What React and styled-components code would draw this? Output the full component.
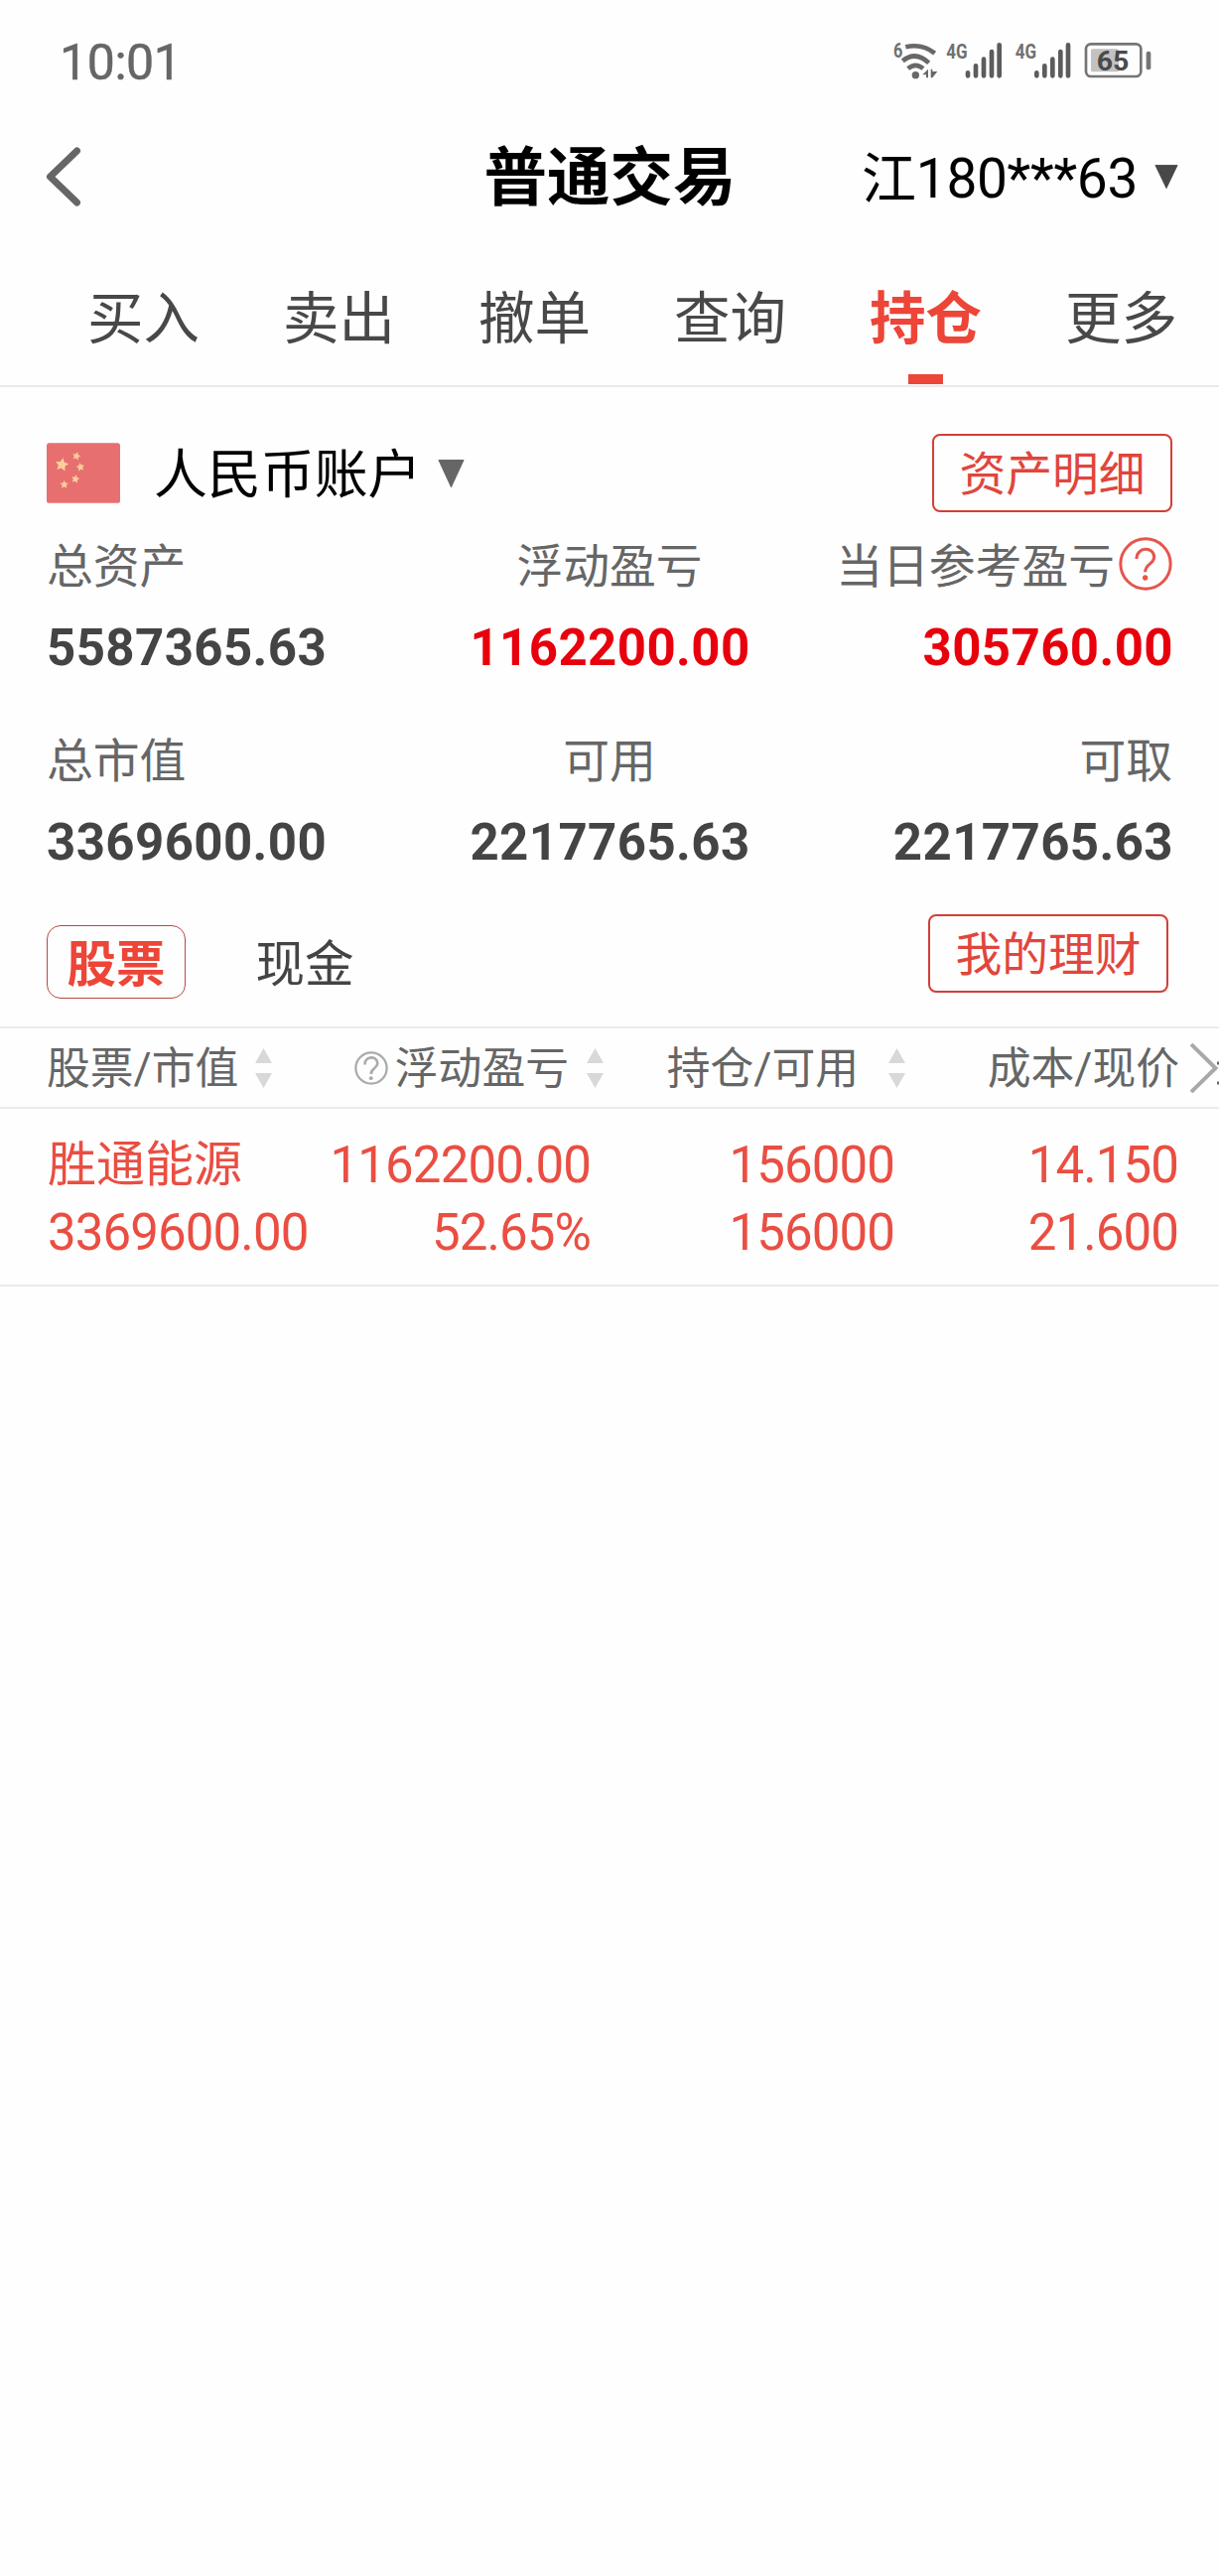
import React from 'react'

// style
import styled, { createGlobalStyle } from 'styled-components';

const red = "#ed4538";
const rowRed = "#ea4e42";

const GlobalStyle = createGlobalStyle`
    body {
        margin: 0;
        background-color: #fefefe;
        color: #444;
        font-family: Roboto, "Noto Sans CJK SC", sans-serif;
    }
`;

const Container = styled.div`
    min-height: 2595px;
    overflow: hidden;
`;

// status bar
const StatusBar = styled.div`
    display: flex;
    justify-content: space-between;
    align-items: center;
    box-sizing: border-box;
    height: 126px;
    padding: 4px 48px 0 60px;
`;

const Time = styled.span`
    margin-bottom: 4px;
    font-size: 50px;
    font-weight: 400;
    -webkit-text-stroke: 0.5px #666;
    letter-spacing: -0.4px;
    line-height: 60px;
    color: #666;
`;

// title bar
const TitleBar = styled.header`
    display: grid;
    grid-template-columns: 1fr auto 1fr;
    align-items: center;
    height: 108px;
    padding: 0 41px 0 42px;
`;

const Title = styled.h1`
    margin: 0;
    font-size: 63.5px;
    font-weight: 700;
    line-height: 80px;
    color: #000;
`;

const Account = styled.div`
    display: flex;
    justify-content: flex-end;
    align-items: center;
    gap: 17px;

    font-size: 55px;
    letter-spacing: -0.3px;
    line-height: 70px;
    color: #000;

    svg {
        margin-bottom: 5px;
    }
`;

// tabs
const Tabs = styled.nav`
    display: grid;
    grid-template-columns: repeat(6, 197px);
    padding: 56px 0 1px 46px;
    border-bottom: 2px solid #e9e9e9;
`;

const Tab = styled.div`
    display: flex;
    flex-direction: column;
    align-items: center;
    gap: 23px;

    font-size: 56.5px;
    font-weight: ${props => props.$active ? 700 : 400};
    line-height: 64px;
    color: ${props => props.$active ? red : "#484848"};

    &::after {
        content: "";
        width: 35px;
        height: 10px;
        background-color: ${props => props.$active ? red : "transparent"};
    }
`;

// assets
const Assets = styled.section`
    padding: 47px 47px 0;
`;

const AccountRow = styled.div`
    display: flex;
    align-items: center;
    height: 79px;
`;

const Currency = styled.span`
    margin: 4px 17px 0 34px;
    font-size: 53.9px;
    line-height: 70px;
    color: #000;
`;

const OutlineButton = styled.button`
    box-sizing: border-box;
    width: 242px;
    height: 79px;
    margin-left: auto;
    padding: 3px 0 0;

    background-color: transparent;
    border: 2px solid #d23f36;
    border-radius: 8px;

    font-family: inherit;
    font-size: 46.8px;
    line-height: 60px;
    color: #e0463c;
`;

const Summary = styled.div`
    display: grid;
    grid-template-columns: 1fr 1fr 1fr;
    row-gap: 53px;
    margin-top: 24px;
`;

const SummaryItem = styled.div`
    display: flex;
    flex-direction: column;
    align-items: ${props => props.$align || "center"};
    gap: 21px;
    white-space: nowrap;
`;

const Label = styled.div`
    display: flex;
    align-items: center;
    gap: 4px;
    height: 62px;
    font-size: 46.8px;
    line-height: 62px;
    color: #666;

    svg {
        margin-bottom: 6px;
    }
`;

const Value = styled.div`
    font-size: 51px;
    font-weight: 700;
    letter-spacing: 0.4px;
    line-height: 60px;
    margin-right: -1px;
    color: ${props => props.$up ? "#e8000d" : "#444"};
`;

// stock / cash switch
const Switcher = styled.div`
    display: flex;
    align-items: flex-start;
    height: 113px;
    padding: 0 51px 0 47px;
    margin-top: 42px;
    border-bottom: 2px solid #ebebeb;
`;

const Kind = styled.div`
    box-sizing: border-box;
    width: 140px;
    height: 74px;
    margin: 11px 50px 0 0;
    padding-top: 2px;

    border: 1px solid ${props => props.$active ? "#b8483f" : "transparent"};
    border-radius: 14px;

    font-size: 49.5px;
    font-weight: ${props => props.$active ? 700 : 400};
    line-height: 74px;
    text-align: center;
    color: ${props => props.$active ? red : "#444"};
`;

// table
const HeadRow = styled.div`
    display: grid;
    grid-template-columns: 275px 286px 304px 275px 41px;
    align-items: center;
    height: 79px;
    padding-left: 47px;
    border-bottom: 2px solid #ebebeb;
    overflow: hidden;
`;

const HeadCell = styled.div`
    display: flex;
    justify-content: ${props => props.$left ? "flex-start" : "flex-end"};
    align-items: center;
    font-size: 43.8px;
    line-height: 60px;
    color: #666;
    white-space: nowrap;

    svg {
        flex-shrink: 0;
    }
`;

const HeadText = styled.span`
    padding-top: 3px;
    margin-left: ${props => props.$before || 0}px;
    margin-right: ${props => props.$gap || 0}px;
`;

const MoreCell = styled(HeadCell)`
    justify-content: flex-start;
    padding-left: 12px;
`;

const Row = styled.div`
    display: grid;
    grid-template-columns: 275px 273px 306px 286px;
    padding: 23px 0 18px 47px;
    border-bottom: 2px solid #ebebeb;
`;

const Cell = styled.div`
    padding-left: ${props => props.$left ? 1 : 0}px;
    text-align: ${props => props.$left ? "left" : "right"};
    font-size: 51px;
    letter-spacing: -0.9px;
    line-height: 68px;
    color: ${rowRed};
    white-space: nowrap;
`;

const StockName = styled.div`
    font-size: 49px;
    letter-spacing: 0;
`;

const BackIcon = () => (
    <svg width="42" height="64" viewBox="0 0 42 64" fill="none" stroke="#666" strokeWidth="7" strokeLinecap="round" strokeLinejoin="round">
        <path d="M35.500 4 L8.500 30 L35.500 56" />
    </svg>
)

const Caret = ({ width, height, color }) => (
    <svg width={width} height={height} viewBox="0 0 26 26" preserveAspectRatio="none">
        <path d="M1 0.500 H25 L13 25.500 Z" fill={color} stroke={color} strokeLinejoin="round" />
    </svg>
)

const Help = ({ size, color, strokeWidth, mark = 1 }) => (
    <svg width={size} height={size} viewBox="0 0 162 162" fill="none" stroke={color} strokeWidth={strokeWidth}>
        <circle cx="81" cy="81" r={80 - strokeWidth / 2} />
        <g transform={`translate(81 81) scale(${mark}) translate(-81 -81)`}>
            <path d="M54 66 C54 28 107 28 107 61 C107 82 80 80 80 106" />
            <circle cx="80" cy="123" r="8" fill={color} stroke="none" />
        </g>
    </svg>
)

const Sort = () => (
    <svg width="17" height="40" viewBox="0 0 17 40" fill="#d8d8d8">
        <path d="M8.500 0 L17 15 H0 Z M8.500 40 L17 25 H0 Z" />
    </svg>
)

const starPoints = (cx, cy, r, turn = 0) =>
    Array.from({ length: 10 }, (_, i) => {
        const a = (i * 36 - 90 + turn) * Math.PI / 180;
        const d = i % 2 ? r * 0.5 : r;
        return `${cx + d * Math.cos(a)},${cy + d * Math.sin(a)}`;
    }).join(" ")

const Flag = () => (
    <svg width="74" height="61" viewBox="0 0 222 182">
        <rect width="222" height="182" rx="8" fill="#e86f70" />
        <g fill="#fbcf9c">
            <polygon points={starPoints(46, 66, 21, 10)} />
            <polygon points={starPoints(90, 40, 13, 15)} />
            <polygon points={starPoints(102, 73, 13, -10)} />
            <polygon points={starPoints(87, 109, 13, 10)} />
            <polygon points={starPoints(53, 126, 13)} />
        </g>
    </svg>
)

const Signal = ({ x }) => (
    <g transform={`translate(${x} 0)`}>
        <text x="0" y="88" fontSize="63" fontWeight="700" fill="#707070" textLength="64" lengthAdjust="spacingAndGlyphs">4G</text>
        <g stroke="#5c5c5c" strokeWidth="14" strokeLinecap="round">
            <path d="M65 130 V139 M89 109 V139 M113 89 V139 M137 66 V139 M160 46 V139" />
        </g>
    </g>
)

const StatusIcons = () => (
    <svg width="300" height="70" viewBox="0 0 900 210">
        <text x="60" y="85" fontSize="63" fontWeight="700" fill="#707070" textLength="28" lengthAdjust="spacingAndGlyphs">6</text>
        <g fill="none" stroke="#686868" strokeWidth="14">
            <path d="M97 52 Q147 40 185 71" />
            <path d="M88 94 Q127 62 167 100" />
            <path d="M104 117 Q127 98 150 117" />
        </g>
        <circle cx="127" cy="137" r="11" fill="#686868" />
        <path d="M148 136 L165 119 V145 H159 V136 Z M173 119 H178 V126 H193 L178 145 H173 Z" fill="#686868" />
        <Signal x={220} />
        <Signal x={428} />
        <rect x="642" y="43" width="166" height="98" rx="15" fill="none" stroke="#757575" strokeWidth="8" />
        <rect x="657" y="58" width="84" height="69" rx="5" fill="#c2c2c2" />
        <text x="674" y="122" fontSize="85" fontWeight="700" fill="#4a4a4a" textLength="98" lengthAdjust="spacingAndGlyphs">65</text>
        <rect x="824" y="65" width="14" height="56" rx="6" fill="#757575" />
    </svg>
)

// the two ticks are the edge of the next column
const ChevronRight = () => (
    <svg width="29" height="50" viewBox="0 0 29 50" fill="none">
        <path d="M1 1 L25.500 25 L1 49" stroke="#a9a9a9" strokeWidth="4" />
        <path d="M27 20 H29 M27 40 H29" stroke="#666" strokeWidth="3" />
    </svg>
)

const tabs = ["买入", "卖出", "撤单", "查询", "持仓", "更多"];

const summary = [
    { label: "总资产", value: "5587365.63", align: "flex-start" },
    { label: "浮动盈亏", value: "1162200.00", up: true },
    { label: "当日参考盈亏", value: "305760.00", align: "flex-end", up: true, help: true },
    { label: "总市值", value: "3369600.00", align: "flex-start" },
    { label: "可用", value: "2217765.63" },
    { label: "可取", value: "2217765.63", align: "flex-end" },
];

const App = () => {
  return (
    <Container>
        <GlobalStyle />
        <StatusBar>
            <Time>10:01</Time>
            <StatusIcons />
        </StatusBar>
        <TitleBar>
            <BackIcon />
            <Title>普通交易</Title>
            <Account>
                江180***63
                <Caret width={24} height={24} color="#484848" />
            </Account>
        </TitleBar>
        <Tabs>
            {tabs.map(tab => (
                <Tab key={tab} $active={tab === "持仓"}>{tab}</Tab>
            ))}
        </Tabs>

        <Assets>
            <AccountRow>
                <Flag />
                <Currency>人民币账户</Currency>
                <Caret width={27} height={28} color="#666" />
                <OutlineButton>资产明细</OutlineButton>
            </AccountRow>
            <Summary>
                {summary.map(item => (
                    <SummaryItem key={item.label} $align={item.align}>
                        <Label>
                            {item.label}
                            {item.help && <Help size={54} color="#e6554c" strokeWidth={9} />}
                        </Label>
                        <Value $up={item.up}>{item.value}</Value>
                    </SummaryItem>
                ))}
            </Summary>
        </Assets>

        <Switcher>
            <Kind $active>股票</Kind>
            <Kind>现金</Kind>
            <OutlineButton>我的理财</OutlineButton>
        </Switcher>

        <HeadRow>
            <HeadCell $left>
                <HeadText $gap={17}>股票/市值</HeadText>
                <Sort />
            </HeadCell>
            <HeadCell>
                <Help size={34} color="#ababab" strokeWidth={11} mark={1.15} />
                <HeadText $before={7} $gap={18}>浮动盈亏</HeadText>
                <Sort />
            </HeadCell>
            <HeadCell>
                <HeadText $gap={30}>持仓/可用</HeadText>
                <Sort />
            </HeadCell>
            <HeadCell>
                <HeadText $gap={-1}>成本/现价</HeadText>
            </HeadCell>
            <MoreCell>
                <ChevronRight />
            </MoreCell>
        </HeadRow>
        <Row>
            <Cell $left>
                <StockName>胜通能源</StockName>
                3369600.00
            </Cell>
            <Cell>
                <div>1162200.00</div>
                <div>52.65%</div>
            </Cell>
            <Cell>
                <div>156000</div>
                <div>156000</div>
            </Cell>
            <Cell>
                <div>14.150</div>
                <div>21.600</div>
            </Cell>
        </Row>
    </Container>
  )
}

export default App
